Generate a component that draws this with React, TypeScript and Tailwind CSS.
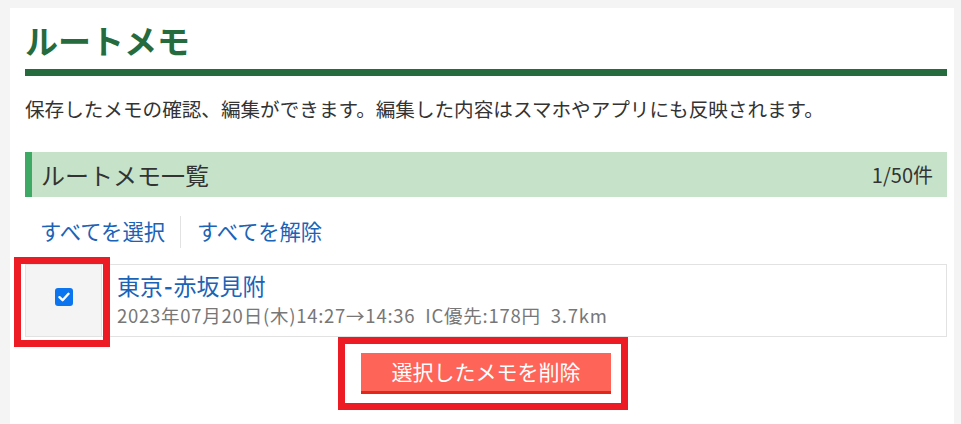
export default function App() {
  return (
    <div className="min-h-screen bg-[#f4f4f4] pt-[8px] pl-[10px] pr-[7px] font-['Noto_Sans_CJK_JP',sans-serif]">
      <div className="bg-white min-h-[416px] pl-[15px] pr-[7px] pt-[10px]">
        {/* page title */}
        <h1 className="text-[33px] font-bold leading-[44px] text-[#256b3e] pb-[7px] border-b-[7px] border-[#256b3e]">
          ルートメモ
        </h1>

        <p className="mt-[18px] text-[19.6px] leading-[30px] text-[#333]">
          保存したメモの確認、編集ができます。編集した内容はスマホやアプリにも反映されます。
        </p>

        {/* list header */}
        <div className="mt-[28px] h-[45px] flex items-center justify-between bg-[#c6e3c9] border-l-[7px] border-[#3ea965] pl-[9px] pr-[14px]">
          <span className="text-[24px] text-[#333]">ルートメモ一覧</span>
          <span className="text-[20px] text-[#333]">1/50件</span>
        </div>

        <div className="mt-[19px] flex text-[21.3px] leading-[29px] text-[#1b63b6]">
          <a href="#" className="block pl-[15px] pr-[15px] pb-[3px]">すべてを選択</a>
          <a href="#" className="block pl-[16px] pr-[16px] pb-[3px] border-l border-[#e2e2e2]">すべてを解除</a>
        </div>

        {/* memo card */}
        <div className="relative mt-[16px] h-[73px] flex border border-[#e2e2e2]">
          <div className="w-[76px] bg-[#f4f4f4] border-r border-[#e2e2e2] flex justify-center pt-[23px]">
            <span className="w-[18px] h-[18px] rounded-[3px] bg-[#0b75ef] flex items-center justify-center">
              <svg width="12" height="10" viewBox="0 0 12 10" fill="none">
                <path d="M1.5 5.2 L4.6 8.2 L10.5 1.8" stroke="white" strokeWidth="2.4" strokeLinecap="round" strokeLinejoin="round" />
              </svg>
            </span>
          </div>
          <div className="pl-[15px] pt-[6px]">
            <a href="#" className="block text-[23px] leading-[28px] text-[#1b63b6]">
              東京<span className="px-[1px] font-bold">-</span>赤坂見附
            </a>
            <div className="mt-[4px] text-[18.5px] leading-[24px] tracking-[0.75px] text-[#777]">
              2023年07月20日(木)14:27→14:36<span className="ml-[10px]">IC優先:178円</span><span className="ml-[10px]">3.7km</span>
            </div>
          </div>
          {/* annotation */}
          <div className="absolute left-[-12px] top-[-8px] w-[96px] h-[90px] border-[7px] border-[#ed1c24]" />
        </div>

        <div className="mt-[16px] flex justify-center">
          <div className="relative">
            <button className="w-[250px] h-[41px] flex items-center justify-center bg-[#ff6458] border-b-[3px] border-[#e2281c] text-white text-[21px]">
              選択したメモを削除
            </button>
            <div className="absolute left-[-23px] top-[-16px] w-[290px] h-[73px] border-[7px] border-[#ed1c24]" />
          </div>
        </div>
      </div>
    </div>
  );
}
